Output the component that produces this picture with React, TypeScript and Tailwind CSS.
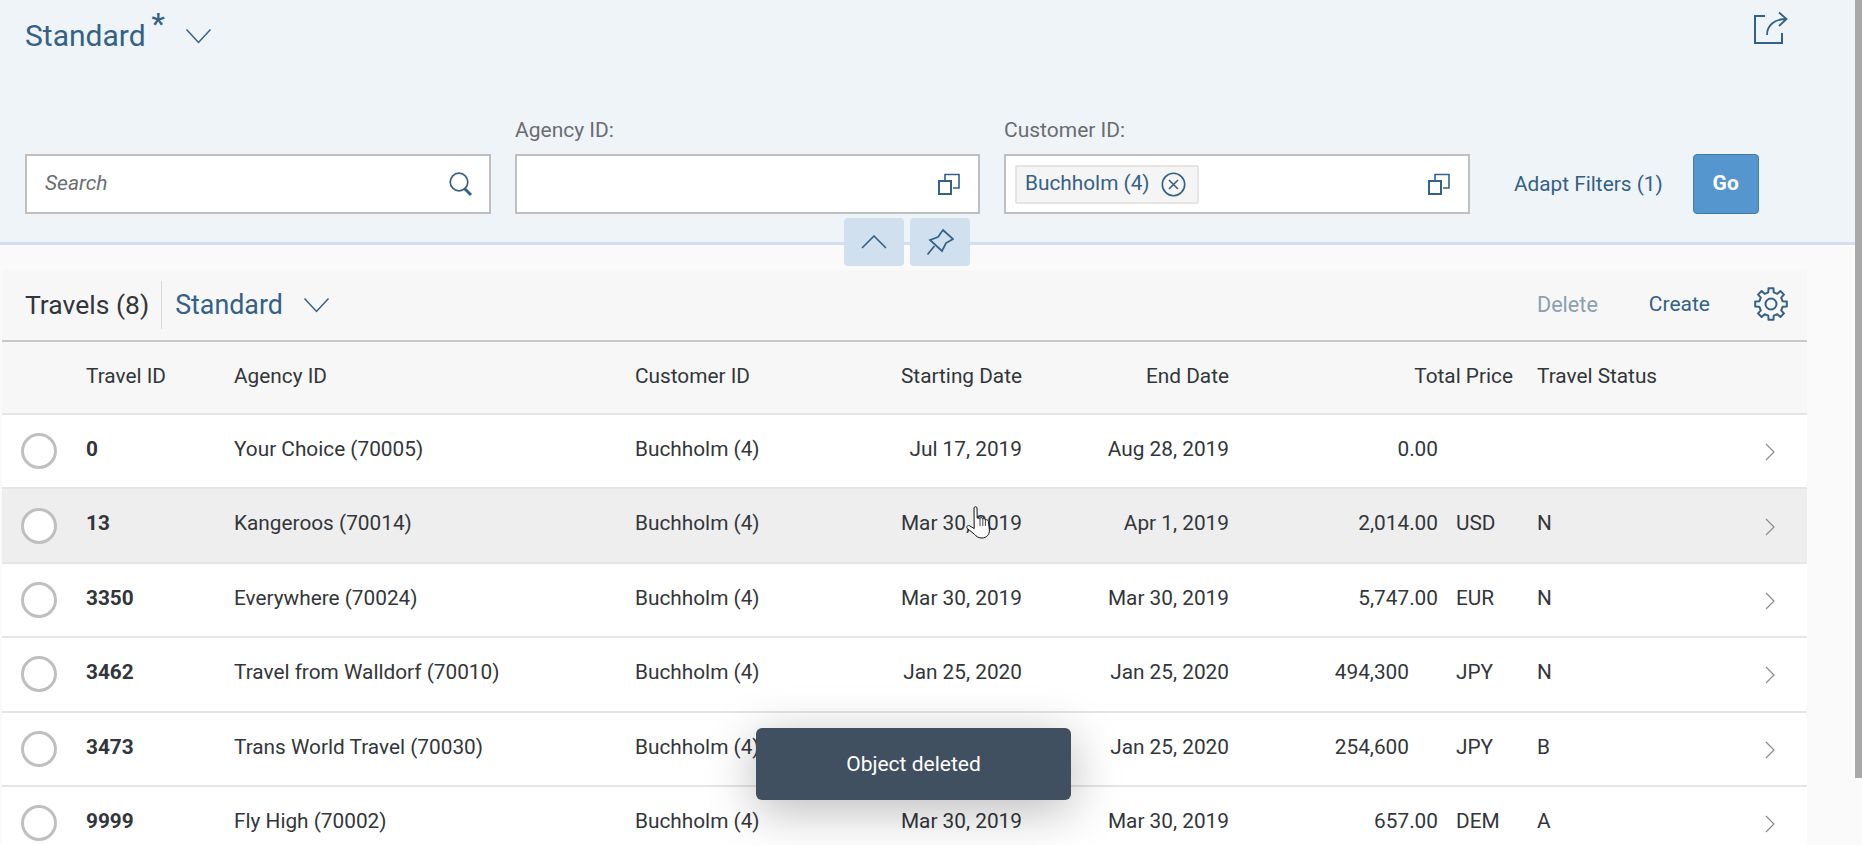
const font = "font-['Roboto',sans-serif]"
const cols = "grid grid-cols-[72px_148px_401px_260px_151px_207px_284px_195px_87px] items-center"

type Travel = {
  id: string
  agency: string
  start: string
  end: string
  price: string
  currency: string
  status: string
  noDecimals?: boolean
  hover?: boolean
}

const travels: Travel[] = [
  { id: "0", agency: "Your Choice (70005)", start: "Jul 17, 2019", end: "Aug 28, 2019", price: "0.00", currency: "", status: "" },
  { id: "13", agency: "Kangeroos (70014)", start: "Mar 30, 2019", end: "Apr 1, 2019", price: "2,014.00", currency: "USD", status: "N", hover: true },
  { id: "3350", agency: "Everywhere (70024)", start: "Mar 30, 2019", end: "Mar 30, 2019", price: "5,747.00", currency: "EUR", status: "N" },
  { id: "3462", agency: "Travel from Walldorf (70010)", start: "Jan 25, 2020", end: "Jan 25, 2020", price: "494,300", currency: "JPY", status: "N", noDecimals: true },
  { id: "3473", agency: "Trans World Travel (70030)", start: "Jan 25, 2020", end: "Jan 25, 2020", price: "254,600", currency: "JPY", status: "B", noDecimals: true },
  { id: "9999", agency: "Fly High (70002)", start: "Mar 30, 2019", end: "Mar 30, 2019", price: "657.00", currency: "DEM", status: "A" },
]

// eight tooth cog outline, SAP's settings icon isn't in the icon packages
function cogPath() {
  const pts: string[] = []
  for (let i = 0; i < 8; i++) {
    const a = (i * 45 * Math.PI) / 180
    const at = (r: number, d: number) => {
      const t = a + (d * Math.PI) / 180
      return `${(17 + r * Math.sin(t)).toFixed(2)} ${(17 - r * Math.cos(t)).toFixed(2)}`
    }
    pts.push(at(12, -13), at(16, -9), at(16, 9), at(12, 13))
  }
  return "M" + pts.join(" L") + " Z"
}

function Chevron({ className }: { className: string }) {
  return (
    <svg viewBox="0 0 26 16" fill="none" stroke="currentColor" strokeWidth="1.5" className={className}>
      <path d="M1 1.5 L13 14.5 L25 1.5" />
    </svg>
  )
}

function ValueHelpIcon() {
  return (
    <svg viewBox="0 0 22 22" fill="none" stroke="#346187" strokeWidth="2" className="w-[22px] h-[22px]">
      <rect x="1" y="8" width="12" height="13" />
      <path d="M7 7 V1.5 H21 V15 H15" strokeWidth="1.6" />
    </svg>
  )
}

function Field({ label, width, children }: { label: string; width: string; children?: React.ReactNode }) {
  return (
    <div className={`${width} flex flex-col`}>
      <label className="text-[21px] leading-[24px] text-[#6a6d70] mb-[12px] h-[24px]">{label}</label>
      <div className="h-[60px] border-2 border-[#bfbfbf] bg-white flex items-center pl-[9px] pr-[18px]">
        <div className="flex-1">{children}</div>
        <ValueHelpIcon />
      </div>
    </div>
  )
}

function HandCursor() {
  return (
    <svg viewBox="0 0 24 33" className="absolute left-[966px] top-[506px] w-[24px] h-[33px]">
      <path
        d="M8 2 C8 0.4 11 0.4 11 2 L11.2 12 L14 12.2 C15 11.4 16.4 11.6 16.8 12.8 C17.8 12.2 19 12.6 19.4 13.8 C20.6 13.4 22.2 14 22.4 15.6 L23.4 24 C23.6 28.6 20.4 32 16 32 C12.4 32 10.2 30.4 8.6 28.4 L1.2 22.4 C0 20.6 1.8 18.8 3.6 19.8 L8.2 22.6 Z"
        fill="#fff"
        stroke="#111"
        strokeWidth="1"
      />
      <path d="M14 12.2 V20 M16.8 12.8 V20 M19.4 13.8 V20" stroke="#111" strokeWidth="0.8" fill="none" />
    </svg>
  )
}

function Row({ t }: { t: Travel }) {
  return (
    <div className={`${cols} h-[74.4px] border-b-2 border-[#e5e5e5] text-[20.8px] text-[#32363a] ${t.hover ? "bg-[#eeeeee]" : "bg-white"}`}>
      <div className="flex justify-center pl-[1px]">
        <div className="w-[36px] h-[36px] rounded-full border-[3px] border-[#bfbfbf] bg-white" />
      </div>
      <div className="pl-3 pb-[3px] font-bold">{t.id}</div>
      <div className="pl-3 pb-[3px]">{t.agency}</div>
      <div className="pl-3 pb-[3px]">Buchholm (4)</div>
      <div className="pr-3 pb-[3px] text-right">{t.start}</div>
      <div className="pr-3 pb-[3px] text-right">{t.end}</div>
      <div className="pr-3 pb-[3px] flex">
        <span className={`flex-1 text-right ${t.noDecimals ? "pr-[29px]" : ""}`}>{t.price}</span>
        <span className="w-[57px] ml-[18px]">{t.currency}</span>
      </div>
      <div className="pl-3 pb-[3px]">{t.status}</div>
      <div className="flex justify-center pl-[12px] pt-[2px]">
        <svg viewBox="0 0 10 18" fill="none" stroke="#8c8c8c" strokeWidth="1.2" className="w-[10px] h-[18px]">
          <path d="M1 1 L9 9 L1 17" />
        </svg>
      </div>
    </div>
  )
}

export default function App() {
  return (
    <div className={`${font} relative flex h-[845px] w-[1862px] overflow-hidden bg-[#fafafa]`}>
      <div className="w-[1855px] flex flex-col">
        {/* filter bar */}
        <div className="relative h-[245px] shrink-0 bg-[#eff4f9] border-b-[3px] border-[#d1e0ee] px-[25px]">
          <div className="flex items-center h-[72px] text-[#346187]">
            <span className="text-[30px] leading-none">Standard</span>
            <span className="self-start mt-[6px] ml-[6px] text-[30px] leading-[36px] font-medium">*</span>
            <Chevron className="w-[27px] h-[16px] ml-[20px]" />
            <div className="flex-1" />
            <svg viewBox="0 0 36 34" fill="none" stroke="#346187" strokeWidth="2" className="w-[36px] h-[34px] mr-[41px] -mt-[16px]">
              <path d="M12 5 H2 V32 H29 V22" />
              <path d="M14 24 C14 14 22 8 33 8 M26 1.5 L33.5 8 L26 15" strokeWidth="1.8" />
            </svg>
          </div>
          <div className="flex items-end gap-[24px] mt-[46px]">
            <div className="w-[466px] h-[60px] border-2 border-[#bfbfbf] bg-white flex items-center pl-[18px] pr-[16px]">
              <span className="flex-1 italic text-[21px] text-[#6a6d70]">Search</span>
              <svg viewBox="0 0 24 25" fill="none" stroke="#346187" className="w-[24px] h-[25px]">
                <circle cx="10" cy="10" r="8.8" strokeWidth="1.7" />
                <path d="M15.5 16.5 L22 23" strokeWidth="3" />
              </svg>
            </div>
            <Field label="Agency ID:" width="w-[465px]" />
            <Field label="Customer ID:" width="w-[466px]">
              <div className="inline-flex items-center h-[39px] w-[184px] border-2 border-[#e5e5e5] bg-[#f5f5f5] rounded-[2px] pl-[8px] text-[20.8px] text-[#346187]">
                <span className="whitespace-nowrap">Buchholm (4)</span>
                <svg viewBox="0 0 25 25" fill="none" stroke="#346187" strokeWidth="1.6" className="w-[25px] h-[25px] ml-[11px] shrink-0">
                  <circle cx="12.5" cy="12.5" r="11.2" />
                  <path d="M8 8 L17 17 M17 8 L8 17" />
                </svg>
              </div>
            </Field>
            <span className="h-[60px] leading-[60px] ml-[20px] text-[20.8px] text-[#346187] whitespace-nowrap">Adapt Filters (1)</span>
            <button className="h-[60px] w-[66px] ml-[6px] bg-[#5496cd] border border-[#427cac] rounded-[4px] text-white text-[21px] font-bold">Go</button>
          </div>
          {/* collapse and pin */}
          <div className="absolute left-[844px] top-[218px] flex gap-[6px]">
            <div className="w-[60px] h-[48px] bg-[#d1e0ee] rounded-[4px] flex items-center justify-center">
              <svg viewBox="0 0 26 14" fill="none" stroke="#346187" strokeWidth="1.6" className="w-[26px] h-[14px]">
                <path d="M1 13 L13 1 L25 13" />
              </svg>
            </div>
            <div className="w-[60px] h-[48px] bg-[#d1e0ee] rounded-[4px] flex items-center justify-center">
              <svg viewBox="0 0 28 28" fill="none" stroke="#346187" strokeWidth="1.7" className="w-[28px] h-[28px]">
                <path d="M17 2 L27 11 L20 15 L16 23 L4 12 L12 9 Z" />
                <path d="M8.5 18 L1.5 26.5" />
              </svg>
            </div>
          </div>
        </div>

        {/* table */}
        <div className="mt-[25px] ml-[2px] w-[1805px]">
          <div className="h-[72px] bg-[#f7f7f7] border-b-2 border-[#c8c8c8] flex items-center pl-[23px]">
            <span className="text-[26.5px] text-[#32363a]">Travels (8)</span>
            <span className="w-px h-[48px] bg-[#d9d9d9] ml-[12px]" />
            <span className="text-[26.8px] text-[#346187] ml-[13px]">Standard</span>
            <Chevron className="w-[27px] h-[16px] ml-[20px] text-[#346187]" />
            <div className="flex-1" />
            <span className="text-[21.6px] text-[#8aa0b3]">Delete</span>
            <span className="text-[21px] text-[#346187] ml-[51px]">Create</span>
            <svg viewBox="0 0 34 34" fill="none" stroke="#346187" strokeWidth="2" strokeLinejoin="round" className="w-[34px] h-[34px] ml-[44px] mr-[19px] -mt-[3px]">
              <path d={cogPath()} />
              <circle cx="17" cy="17" r="5.5" />
            </svg>
          </div>
          <div className={`${cols} h-[73px] pb-[2px] bg-[#f7f7f7] border-b-2 border-[#e5e5e5] text-[20.8px] text-[#32363a]`}>
            <div />
            <div className="pl-3">Travel ID</div>
            <div className="pl-3">Agency ID</div>
            <div className="pl-3">Customer ID</div>
            <div className="pr-3 text-right whitespace-nowrap">Starting Date</div>
            <div className="pr-3 text-right">End Date</div>
            <div className="pr-3 text-right">Total Price</div>
            <div className="pl-3 whitespace-nowrap">Travel Status</div>
            <div />
          </div>
          {travels.map((t) => (
            <Row key={t.id} t={t} />
          ))}
        </div>
      </div>

      {/* scrollbar */}
      <div className="w-[7px] bg-[#fafafa]">
        <div className="h-[778px] bg-[#a9a9a9]" />
      </div>

      <HandCursor />

      {/* toast */}
      <div className="absolute left-[756px] top-[728px] w-[315px] h-[72px] pt-[2px] rounded-[6px] bg-[#405060] text-white text-[21px] flex items-center justify-center shadow-[0_10px_50px_rgba(0,0,0,0.28)]">
        Object deleted
      </div>
    </div>
  )
}
